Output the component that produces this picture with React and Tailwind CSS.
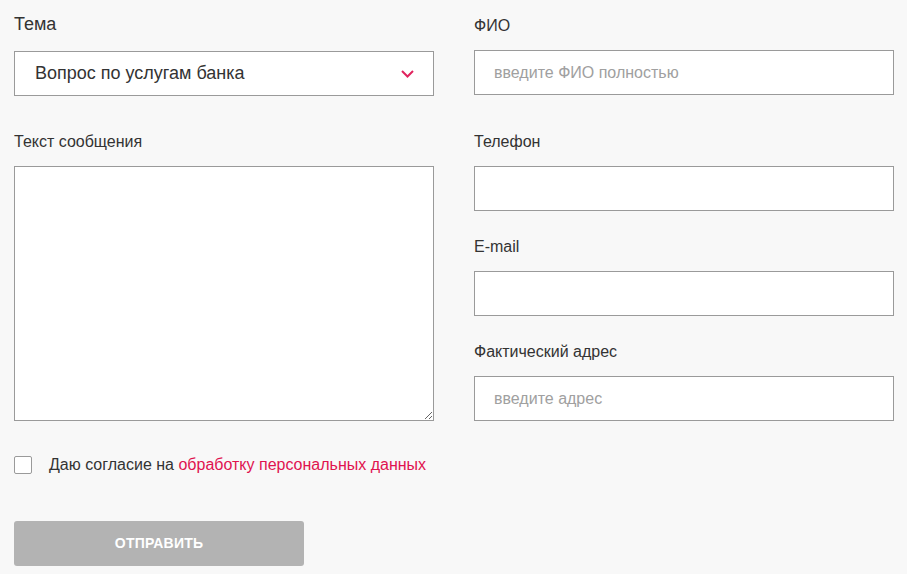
export default function App() {
  return (
    <div className="min-h-screen bg-[#f8f8f8] px-[14px] text-[#333] font-['Liberation_Sans',Arial,sans-serif]">
      <div className="grid grid-cols-[420px_420px] gap-x-10">
        {/* Left column */}
        <div className="pt-[12px]">
          <div className="h-6 text-[18px] leading-6">Тема</div>
          <div className="mt-[15px] flex h-[45px] items-center justify-between border border-[#9a9a9a] bg-white pl-[20px] pr-[19px]">
            <span className="text-[18px]">Вопрос по услугам банка</span>
            <svg width="13" height="8" viewBox="0 0 13 8" fill="none">
              <path d="M1 1l5.5 5.5L12 1" stroke="#e0245e" strokeWidth="2" />
            </svg>
          </div>
          <label className="mt-[36px] block h-5 text-[16px] leading-5">Текст сообщения</label>
          <textarea className="mt-[14px] block h-[255px] w-full border border-[#9a9a9a] bg-white p-3 text-[16px] outline-none" />
        </div>

        {/* Right column */}
        <div className="pt-[16px]">
          <label className="block h-5 text-[16px] leading-5">ФИО</label>
          <input
            className="mt-[14px] block h-[45px] w-full border border-[#9a9a9a] bg-white px-[19px] text-[16px] outline-none placeholder:text-[#a0a0a0]"
            placeholder="введите ФИО полностью"
          />
          <label className="mt-[37px] block h-5 text-[16px] leading-5">Телефон</label>
          <input className="mt-[14px] block h-[45px] w-full border border-[#9a9a9a] bg-white px-[19px] text-[16px] outline-none" />
          <label className="mt-[26px] block h-5 text-[16px] leading-5">E-mail</label>
          <input className="mt-[14px] block h-[45px] w-full border border-[#9a9a9a] bg-white px-[19px] text-[16px] outline-none" />
          <label className="mt-[26px] block h-5 text-[16px] leading-5">Фактический адрес</label>
          <input
            className="mt-[14px] block h-[45px] w-full border border-[#9a9a9a] bg-white px-[19px] text-[16px] outline-none placeholder:text-[#a0a0a0]"
            placeholder="введите адрес"
          />
        </div>
      </div>

      <div className="mt-[34px] flex items-center">
        <input type="checkbox" className="h-[18px] w-[18px] appearance-none rounded-[2px] border border-[#9a9a9a] bg-white" />
        <span className="ml-[17px] text-[16px] leading-5">
          Даю согласие на <a href="#" className="text-[#e0134f]">обработку персональных данных</a>
        </span>
      </div>

      <button className="mt-[46px] block h-[45px] w-[290px] rounded-[3px] bg-[#b3b3b3] text-[14px] font-bold uppercase tracking-[0.2px] text-white">
        Отправить
      </button>
    </div>
  );
}
